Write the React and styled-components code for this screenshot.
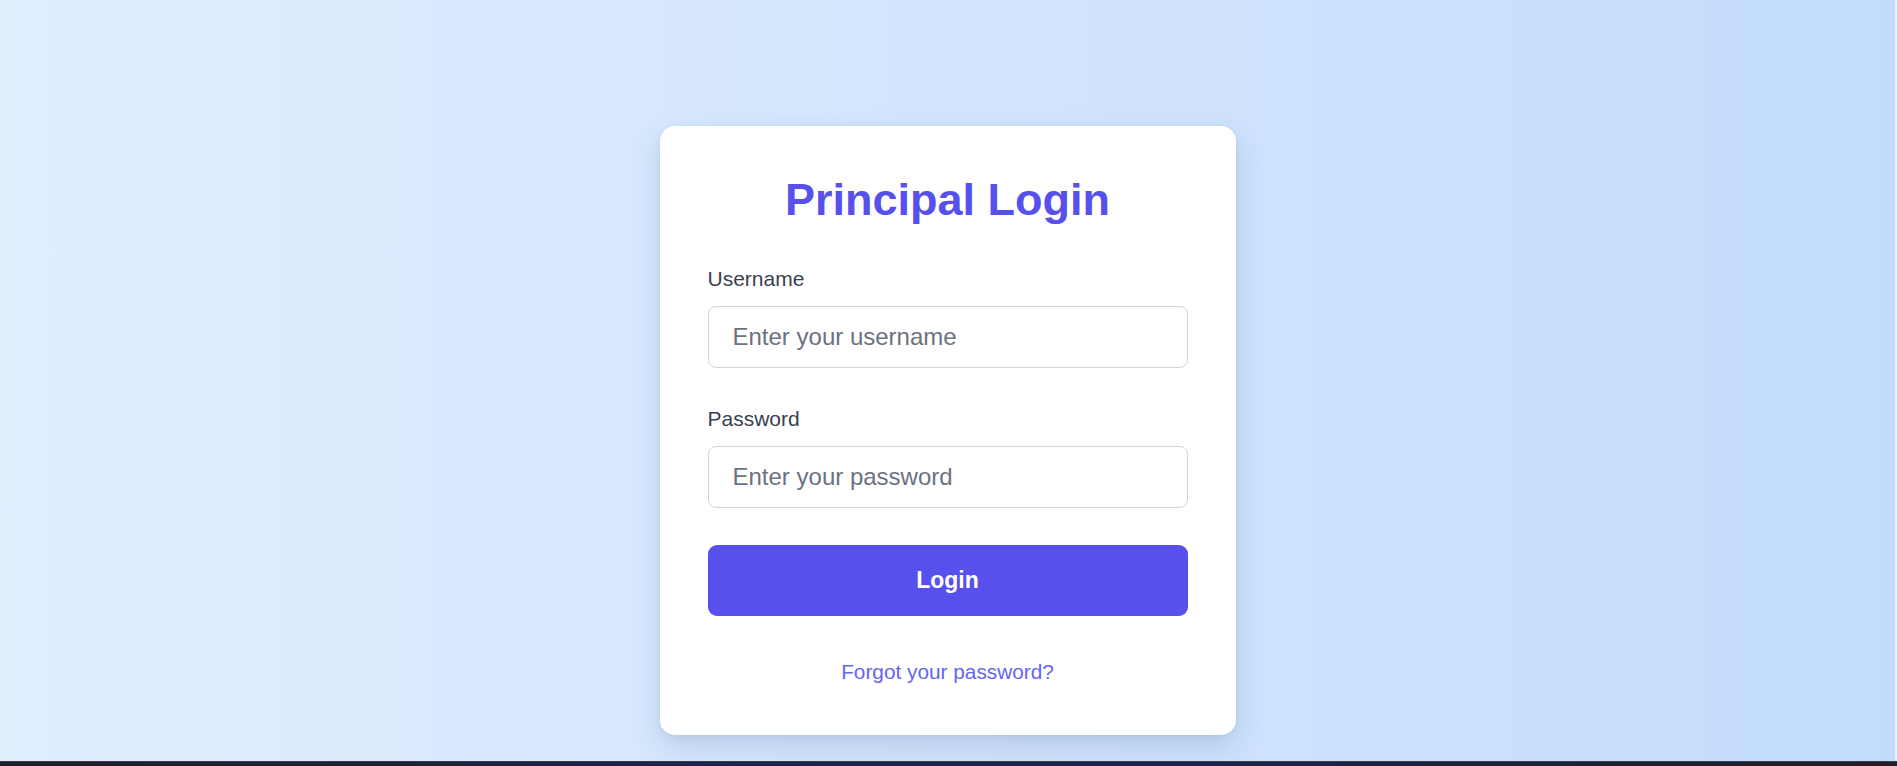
import React from "react";
import styled, { createGlobalStyle } from "styled-components";

const GlobalStyle = createGlobalStyle`
  html, body {
    margin: 0;
    padding: 0;
    height: 100%;
    overflow: hidden;
  }
  body {
    font-family: "Liberation Sans", Arial, sans-serif;
    background: #1e2029;
  }
  * { box-sizing: border-box; }
`;

const Screen = styled.div`
  height: 766px;
  display: flex;
  flex-direction: column;
`;

const Viewport = styled.div`
  flex: 1;
  display: flex;
`;

const Page = styled.main`
  flex: 1;
  background: linear-gradient(to right, #e0eefe 0%, #d3e5fd 50%, #c3dcfc 100%);
  display: flex;
  justify-content: center;
  align-items: flex-start;
  padding-top: 126px;
`;

const EdgeStrip = styled.div`
  width: 2px;
  background: #eaf1fb;
`;

const Taskbar = styled.div`
  height: 5px;
  border-top: 1px solid #3a3e4a;
  background: linear-gradient(to right, #1e1f29 0%, #1a2550 40%, #1a2550 60%, #1e1f29 100%);
`;

const Card = styled.form`
  width: 576px;
  background: #ffffff;
  border-radius: 15px;
  padding: 48px 48px 51px;
  box-shadow: 0 12px 30px rgba(40, 70, 130, 0.16), 0 2px 6px rgba(40, 70, 130, 0.06);
  display: flex;
  flex-direction: column;
`;

const Title = styled.h1`
  margin: 0 0 41px;
  text-align: center;
  color: #5850ec;
  font-size: 45px;
  font-weight: 700;
  line-height: normal;
`;

const Field = styled.div`
  display: flex;
  flex-direction: column;
  margin-bottom: ${(p) => p.$gap}px;
`;

const Label = styled.label`
  font-size: 21px;
  color: #374151;
  margin-bottom: 15px;
  line-height: normal;
`;

const Input = styled.input`
  height: 62px;
  width: 100%;
  border: 1px solid #d1d5db;
  border-radius: 8px;
  padding: 0 24px;
  font-family: inherit;
  font-size: 24px;
  color: #111827;
  background: #fff;
  outline: none;
  &::placeholder {
    color: #6b7280;
  }
`;

const Button = styled.button`
  height: 71px;
  width: 100%;
  border: none;
  border-radius: 9px;
  background: #5850ec;
  color: #ffffff;
  font-family: inherit;
  font-size: 23px;
  font-weight: 700;
  cursor: pointer;
`;

const Footer = styled.div`
  margin-top: 44px;
  text-align: center;
`;

const Link = styled.a`
  font-size: 20.8px;
  color: #6366f1;
  text-decoration: none;
  line-height: normal;
`;

export default function App() {
  return (
    <>
      <GlobalStyle />
      <Screen>
        <Viewport>
          <Page>
            <Card onSubmit={(e) => e.preventDefault()}>
              <Title>Principal Login</Title>
              <Field $gap={39}>
                <Label htmlFor="username">Username</Label>
                <Input id="username" type="text" placeholder="Enter your username" />
              </Field>
              <Field $gap={37}>
                <Label htmlFor="password">Password</Label>
                <Input id="password" type="password" placeholder="Enter your password" />
              </Field>
              <Button type="submit">Login</Button>
              <Footer>
                <Link href="#">Forgot your password?</Link>
              </Footer>
            </Card>
          </Page>
          <EdgeStrip />
        </Viewport>
        <Taskbar />
      </Screen>
    </>
  );
}
